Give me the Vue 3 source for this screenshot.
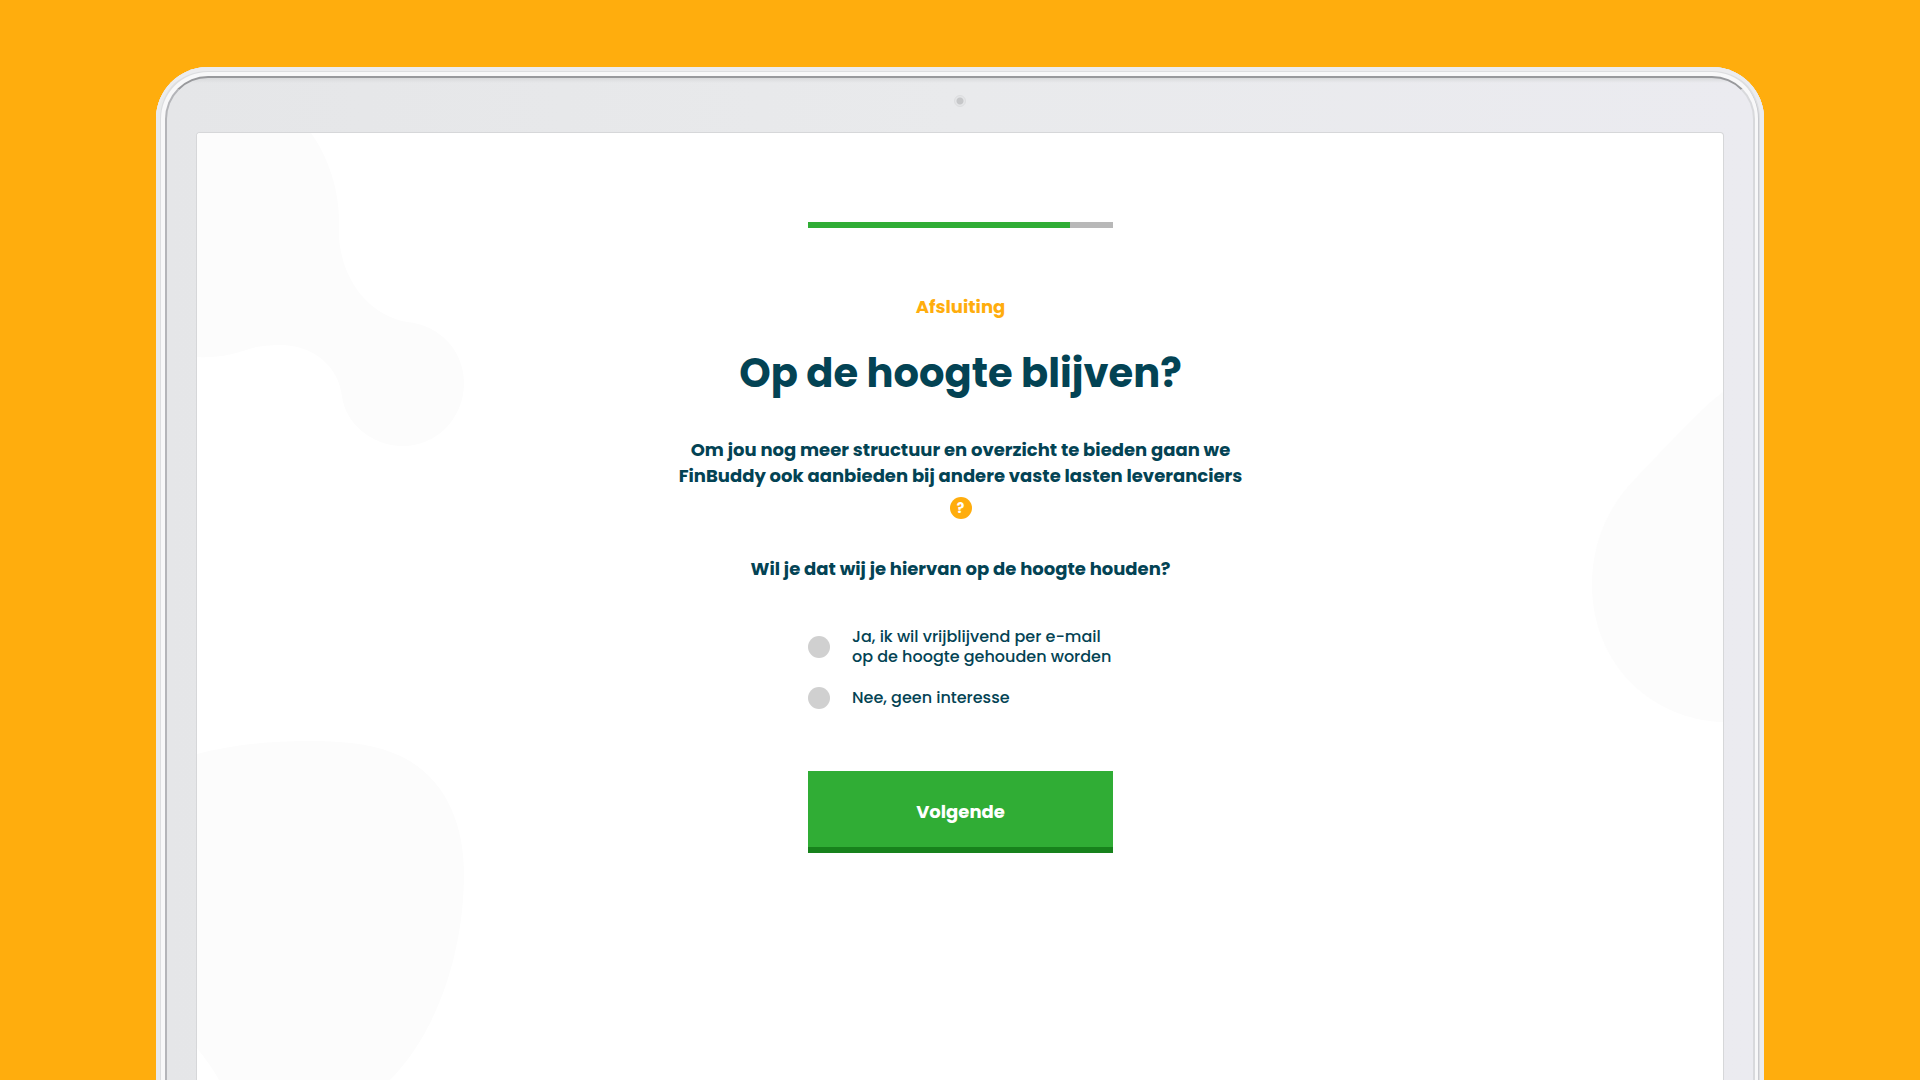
<script setup>
import { ref } from 'vue'

const progress = 86
const answer = ref('')
const options = [
  { value: 'yes', lines: ['Ja, ik wil vrijblijvend per e-mail', 'op de hoogte gehouden worden'] },
  { value: 'no', lines: ['Nee, geen interesse'] },
]
</script>

<template>
  <div class="page">
    <div class="lid">
      <div class="bezel">
        <div class="camera-bar">
          <span class="camera"></span>
        </div>
        <main class="screen">
          <svg class="blob blob-top" width="268" height="314" viewBox="0 0 268 314" aria-hidden="true">
            <path d="M0 0H114C132 25 142 58 142 87V104C145 148 172 182 210 189C243 192 267 218 267 250C267 285 240 313 206 313C174 313 149 290 145 264C142 234 117 212 83 212C68 212 56 214 46 218C30 223 16 225 0 224Z" />
          </svg>
          <svg class="blob blob-bottom" width="268" height="339" viewBox="0 0 268 339" aria-hidden="true">
            <path d="M0 13C34 4 72 0 110 0C143 0 172 2 196 12C246 31 267 80 267 132C267 215 238 294 193 339H22C16 328 8 317 0 307Z" />
          </svg>
          <svg class="blob blob-right" width="131" height="331" viewBox="0 0 131 331" aria-hidden="true">
            <path d="M131 0C116 11 100 28 84 44L45 85C18 112 0 148 0 193C0 270 58 328 131 330Z" />
          </svg>

          <form class="step" @submit.prevent>
            <div class="progress" role="progressbar" aria-label="Voortgang" :aria-valuenow="progress" aria-valuemin="0" aria-valuemax="100">
              <div class="progress-fill" :style="{ width: progress + '%' }"></div>
            </div>
            <p class="eyebrow">Afsluiting</p>
            <h1 class="title">Op de hoogte blijven?</h1>
            <p class="intro">
              Om jou nog meer structuur en overzicht te bieden gaan we<br />
              FinBuddy ook aanbieden bij andere vaste lasten leveranciers
            </p>
            <button type="button" class="help">?</button>
            <p id="question" class="intro question">Wil je dat wij je hiervan op de hoogte houden?</p>
            <div class="options" role="radiogroup" aria-labelledby="question">
              <label v-for="o in options" :key="o.value" class="option" :for="'answer-' + o.value">
                <input :id="'answer-' + o.value" v-model="answer" class="radio" type="radio" name="answer" :value="o.value" />
                <span class="option-text">
                  <span v-for="line in o.lines" :key="line" class="option-line">{{ line }}</span>
                </span>
              </label>
            </div>
            <button type="submit" class="next">Volgende</button>
          </form>
        </main>
      </div>
    </div>
  </div>
</template>

<style>
body {
  margin: 0;
}
</style>

<style scoped>
.page {
  box-sizing: border-box;
  display: flex;
  min-height: 100vh;
  padding: 67px 156px 0;
  overflow: hidden;
  background: #ffad0d;
  color: #034354;
  font-family: Poppins, Inter, sans-serif;
}
/* The lower edge of the lid runs out of view. */
.lid {
  display: flex;
  flex: 1;
  margin-bottom: -12px;
  padding: 9px 9px 0;
  border-radius: 52px 52px 0 0;
  background: #f8f8f9;
  box-shadow:
    inset 0 4px 0 #ececee,
    inset 4px 0 0 #e8eaeb,
    inset -4px 0 0 #ebecef,
    inset 0 0 0 5px #dddee0,
    inset -6px 0 0 #c9cacf;
}
.bezel {
  display: flex;
  flex: 1;
  flex-direction: column;
  padding: 0 30px;
  border: 2px solid;
  border-color: #98999c #d8d9dc transparent #b4b5b9;
  border-bottom: 0;
  border-radius: 43px 43px 0 0;
  background:
    linear-gradient(#d9dadc, transparent 5px),
    linear-gradient(to right, #e5e6e8, #e9eaec 50%, #ebebf0);
}
.camera-bar {
  display: flex;
  justify-content: center;
  height: 38px;
  padding-top: 17px;
}
.camera {
  box-sizing: border-box;
  width: 12px;
  height: 12px;
  border: 1px solid #dcdddf;
  border-radius: 50%;
  background: radial-gradient(circle, #c6c7c9 3px, #e4e5e7 4px);
}
.screen {
  position: relative;
  flex: 1;
  overflow: hidden;
  border-radius: 3px 3px 0 0;
  background: #fff;
  box-shadow: 0 0 0 1px #d6d7d9;
}
.blob {
  position: absolute;
  fill: #fcfcfc;
}
.blob-top {
  top: 0;
  left: 0;
}
.blob-bottom {
  top: 608px;
  left: 0;
}
.blob-right {
  top: 259px;
  right: 0;
}
.step {
  position: relative;
  display: flex;
  flex-direction: column;
  align-items: center;
  padding: 89px 0 96px 1px;
}
.progress {
  width: 305px;
  height: 6px;
  background: #b8b8b8;
}
.progress-fill {
  height: 100%;
  background: #30ad35;
}
.eyebrow {
  margin: 66px 0 0;
  color: #ffad0d;
  font-size: 18px;
  font-weight: 700;
  line-height: 26px;
}
.title {
  margin: 23px 0 0;
  font-size: 40px;
  font-weight: 700;
  line-height: 60px;
}
.intro {
  margin: 34px 0 0;
  font-size: 18px;
  font-weight: 700;
  line-height: 26px;
  text-align: center;
}
.help {
  width: 22px;
  height: 22px;
  margin-top: 8px;
  padding: 0;
  border: 0;
  border-radius: 50%;
  background: #ffad0d;
  color: #fff;
  font: inherit;
  font-size: 14px;
  font-weight: 700;
  line-height: 22px;
}
.question {
  margin-top: 37px;
}
.options {
  display: flex;
  flex-direction: column;
  gap: 20px;
  width: 305px;
  margin-top: 45px;
}
.option {
  display: flex;
  align-items: center;
  gap: 22px;
}
.radio {
  flex: none;
  width: 22px;
  height: 22px;
  margin: 0;
  border-radius: 50%;
  background: #d0d0d0;
  appearance: none;
}
.radio:checked {
  background: #30ad35;
}
.option-text {
  font-size: 16px;
  font-weight: 500;
  line-height: 20px;
  white-space: nowrap;
}
.option-line {
  display: block;
}
.next {
  box-sizing: border-box;
  width: 305px;
  height: 82px;
  margin-top: 62px;
  padding: 4px 0 0;
  border: 0;
  border-bottom: 6px solid #17821c;
  background: #30ad35;
  color: #fff;
  font: inherit;
  font-size: 18px;
  font-weight: 700;
}
</style>
